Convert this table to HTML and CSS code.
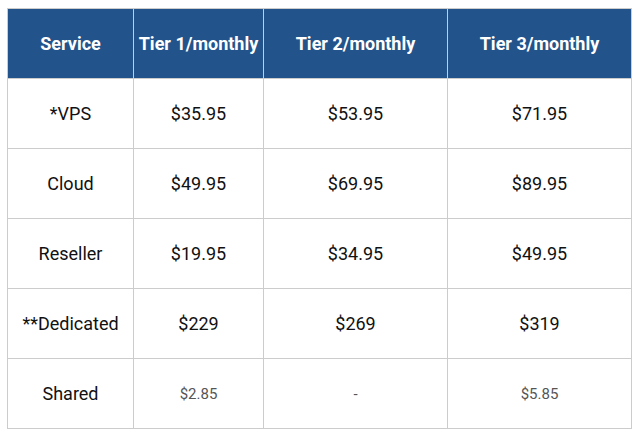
FILE: index.html
```html
<!DOCTYPE html>
<html>
<head>
<meta charset="utf-8">
<link rel="stylesheet" href="styles.css">
</head>
<body>
<table class="pricing">
  <colgroup>
    <col class="c1"><col class="c2"><col class="c3"><col class="c4">
  </colgroup>
  <thead>
    <tr><th>Service</th><th>Tier 1/monthly</th><th>Tier 2/monthly</th><th>Tier 3/monthly</th></tr>
  </thead>
  <tbody>
    <tr><td>*VPS</td><td>$35.95</td><td>$53.95</td><td>$71.95</td></tr>
    <tr><td>Cloud</td><td>$49.95</td><td>$69.95</td><td>$89.95</td></tr>
    <tr><td>Reseller</td><td>$19.95</td><td>$34.95</td><td>$49.95</td></tr>
    <tr><td>**Dedicated</td><td>$229</td><td>$269</td><td>$319</td></tr>
    <tr><td>Shared</td><td class="small">$2.85</td><td class="small">-</td><td class="small">$5.85</td></tr>
  </tbody>
</table>
</body>
</html>
```
FILE: styles.css
```css
html, body {
  margin: 0;
  padding: 0;
  background: #fff;
}
body {
  padding: 8px 0 0 7px;
  font-family: Roboto, "Liberation Sans", sans-serif;
}
.pricing {
  border-collapse: collapse;
  table-layout: fixed;
  width: 625px;
}
.c1 { width: 126px; }
.c2 { width: 130px; }
.c3 { width: 184px; }
.c4 { width: 184px; }
.pricing th, .pricing td {
  border: 1px solid #cccccc;
  height: 70px;
  padding: 0;
  text-align: center;
  vertical-align: middle;
  box-sizing: border-box;
}
.pricing th {
  background: #22538b;
  color: #fff;
  font-weight: 700;
  font-size: 18px;
}
.pricing td {
  color: #111;
  font-size: 18px;
}
.pricing td.small {
  font-size: 15px;
  color: #555;
}
```
